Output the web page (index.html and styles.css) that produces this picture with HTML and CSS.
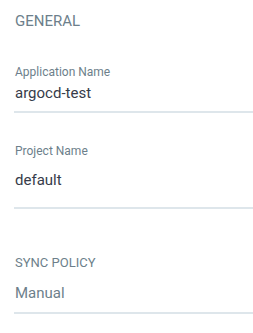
FILE: index.html
```html
<!DOCTYPE html>
<html lang="en">
<head>
    <meta charset="UTF-8">
    <meta name="viewport" content="width=device-width, initial-scale=1.0">
    <title>Application Details</title>
    <link rel="stylesheet" href="styles.css">
</head>
<body>
    <div class="app-panel">
        <h3 class="section-title">GENERAL</h3>

        <div class="field field--app">
            <label class="field-label">Application Name</label>
            <div class="field-value">argocd-test</div>
        </div>

        <div class="field field--project">
            <label class="field-label">Project Name</label>
            <div class="field-value">default</div>
        </div>

        <div class="field field--sync">
            <label class="field-label field-label--upper">SYNC POLICY</label>
            <div class="field-value field-value--muted">Manual</div>
        </div>
    </div>
</body>
</html>
```

FILE: styles.css
```css
* {
    margin: 0;
    padding: 0;
    box-sizing: border-box;
}

body {
    font-family: Roboto, 'Liberation Sans', sans-serif;
    background: #ffffff;
    color: #363c4a;
}

.app-panel {
    padding: 11px 0 0 14px;
}

.section-title {
    font-size: 15px;
    font-weight: 400;
    line-height: 20px;
    color: #6d7f8b;
    padding-left: 1px;
}

.field {
    border-bottom: 2px solid #dee6eb;
    padding-left: 1px;
}

.field-label {
    display: block;
    font-size: 12px;
    line-height: 14px;
    color: #6d7f8b;
}

.field-label--upper {
    font-size: 13px;
}

.field-value {
    font-size: 15px;
    line-height: 18px;
    color: #363c4a;
}

.field-value--muted {
    color: #6d7f8b;
}

.field--app {
    margin-top: 34px;
    padding-bottom: 9px;
}

.field--app .field-value {
    margin-top: 5px;
}

.field--project {
    margin-top: 31px;
    padding-bottom: 18px;
}

.field--project .field-value {
    margin-top: 13px;
}

.field--sync {
    margin-top: 47px;
    padding-bottom: 10px;
}

.field--sync .field-value {
    margin-top: 14px;
}
```
